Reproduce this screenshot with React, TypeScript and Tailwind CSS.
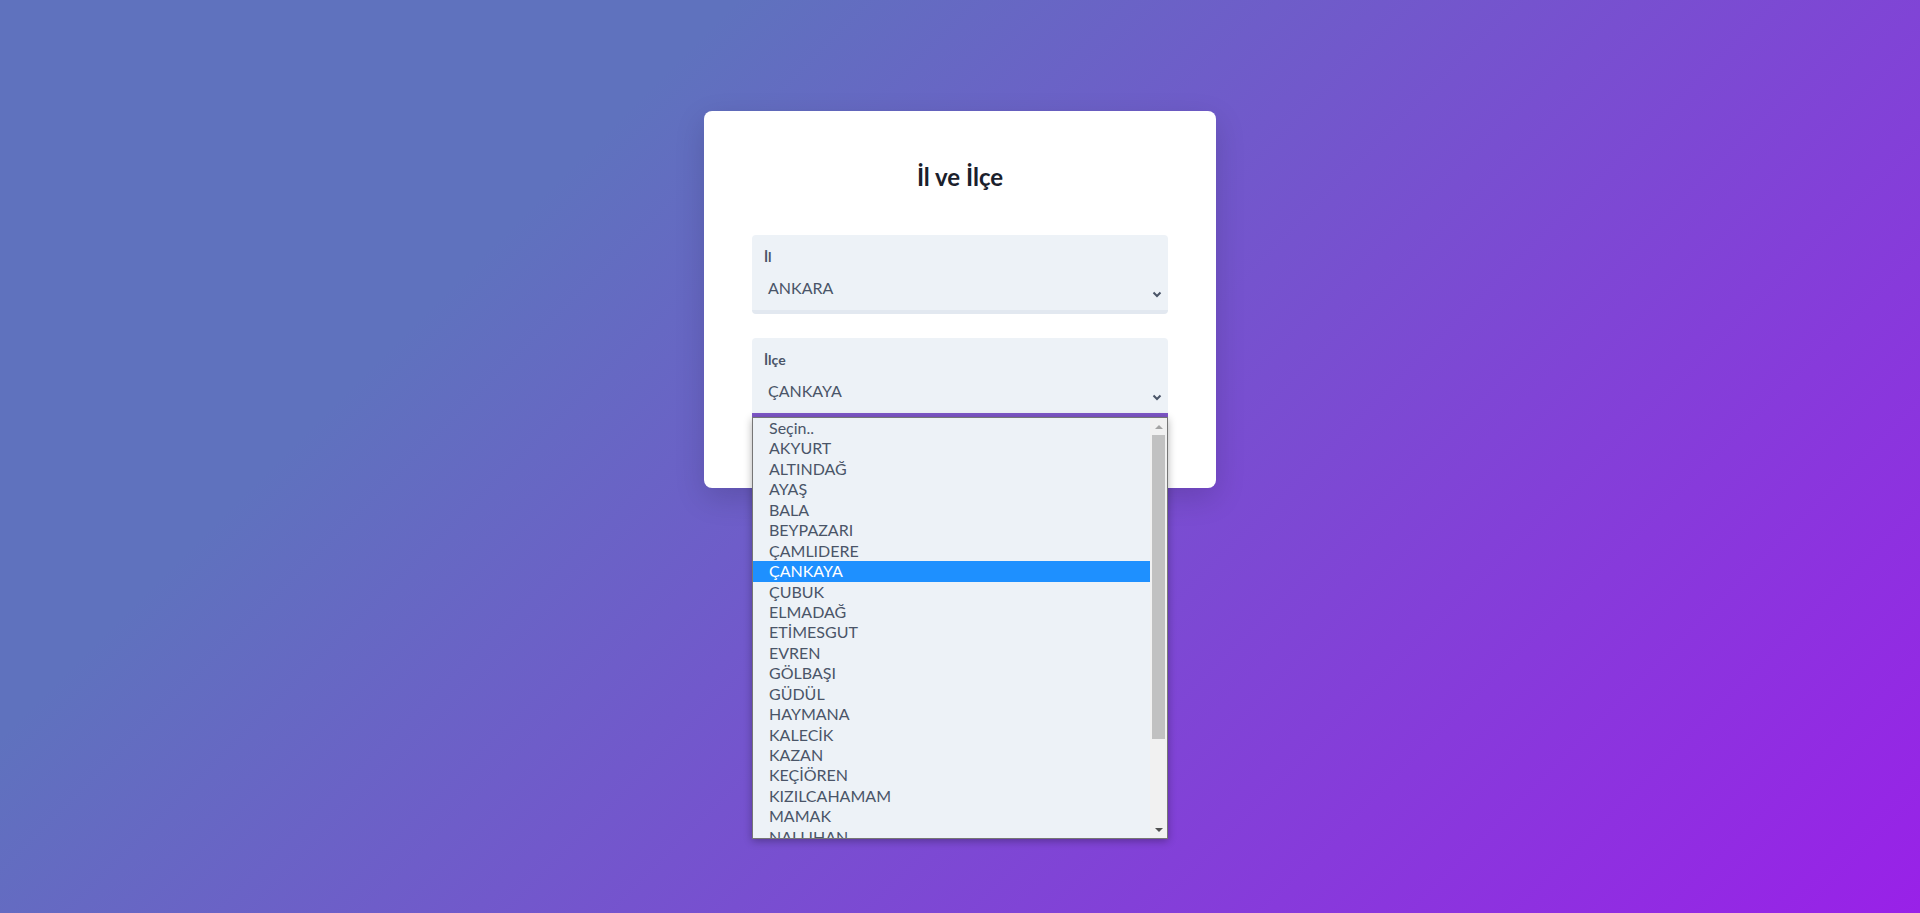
const districts = [
  'Seçin..',
  'AKYURT',
  'ALTINDAĞ',
  'AYAŞ',
  'BALA',
  'BEYPAZARI',
  'ÇAMLIDERE',
  'ÇANKAYA',
  'ÇUBUK',
  'ELMADAĞ',
  'ETİMESGUT',
  'EVREN',
  'GÖLBAŞI',
  'GÜDÜL',
  'HAYMANA',
  'KALECİK',
  'KAZAN',
  'KEÇİÖREN',
  'KIZILCAHAMAM',
  'MAMAK',
  'NALLIHAN',
]

function Chevron() {
  return (
    <svg width="10" height="7" viewBox="0 0 10 7" className="mb-[2px] mr-[-6px] text-[#4a5568]">
      <path d="M1.5 1.5 L5 5 L8.5 1.5" fill="none" stroke="currentColor" strokeWidth="2" />
    </svg>
  )
}

function Field({ label, value, focused }: { label: string; value: string; focused?: boolean }) {
  return (
    <div
      className={`rounded-[4px] bg-[#edf2f7] px-3 pt-3 pb-[10px] border-b-4 ${
        focused ? 'border-[#7e57c8] rounded-b-none' : 'border-[#e2e8f0]'
      }`}
    >
      <label className="block text-[14px] leading-5 font-bold text-[#4a5568]">{label}</label>
      <div className="mt-[9px] flex items-end justify-between">
        <span className="pl-1 text-[16px] leading-6 text-[#4a5568]">{value}</span>
        <Chevron />
      </div>
    </div>
  )
}

export default function App() {
  return (
    <div
      className="min-h-[913px] flex justify-center pt-[111px] bg-[#5f72be] bg-[linear-gradient(315deg,#9921e8_0%,#5f72be_74%)]"
      style={{ fontFamily: 'Lato, "Noto Sans", sans-serif' }}
    >
      <div className="relative h-[377px] w-[512px] rounded-lg bg-white px-12 pt-[50px] shadow-[0_10px_30px_rgba(0,0,0,0.15)]">
        <h1 className="text-center text-2xl leading-8 font-bold text-[#1a202c]">İl ve İlçe</h1>

        <div className="mt-[42px] flex flex-col gap-6">
          <Field label="İl" value="ANKARA" />
          <div className="relative">
            <Field label="İlçe" value="ÇANKAYA" focused />

            {/* open select popup */}
            <div className="absolute left-0 right-0 top-full z-10 flex h-[422px] border border-[#767676] bg-[#edf2f7] shadow-[0_2px_8px_rgba(0,0,0,0.3)]">
              <ul className="flex-1 overflow-hidden">
                {districts.map((d) => (
                  <li
                    key={d}
                    className={`h-[20.45px] pl-4 text-[16px] leading-[20.45px] ${
                      d === 'ÇANKAYA' ? 'bg-[#1e90ff] text-white' : 'text-[#4a5568]'
                    }`}
                  >
                    {d}
                  </li>
                ))}
              </ul>
              <div className="flex w-[17px] flex-col items-center bg-[#f1f1f1]">
                <div className="flex h-[17px] w-full items-center justify-center">
                  <div className="h-0 w-0 border-x-[4px] border-b-[4px] border-x-transparent border-b-[#a3a3a3]" />
                </div>
                <div className="h-[304px] w-[13px] bg-[#c1c1c1]" />
                <div className="flex-1" />
                <div className="flex h-[17px] w-full items-center justify-center">
                  <div className="h-0 w-0 border-x-[4px] border-t-[4px] border-x-transparent border-t-[#505050]" />
                </div>
              </div>
            </div>
          </div>
        </div>
      </div>
    </div>
  )
}
